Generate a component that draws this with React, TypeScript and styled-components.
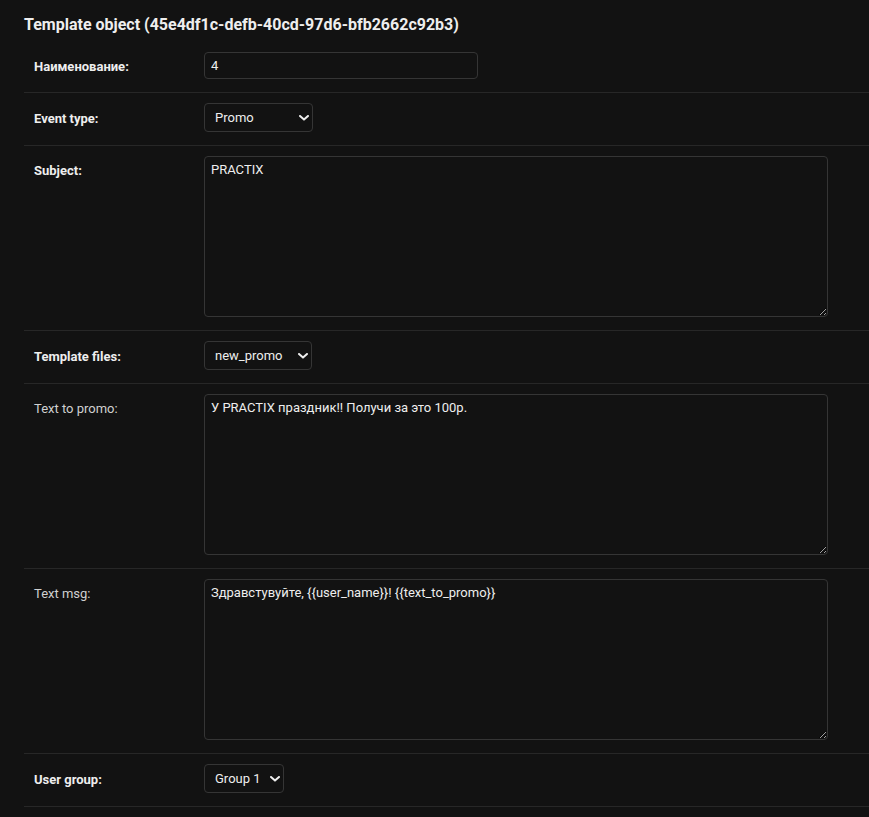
import React from 'react';
import styled, { createGlobalStyle } from 'styled-components';

const bodyBg = '#121212';
const bodyFg = '#eeeeee';
const quietFg = '#d0d0d0';
const hairline = '#272727';
const borderColor = '#353535';

const GlobalStyle = createGlobalStyle`
  html, body {
    margin: 0;
    padding: 0;
    background: ${bodyBg};
    color: ${bodyFg};
    font-family: Roboto, "Noto Sans", "Liberation Sans", sans-serif;
    font-size: 13px;
  }
  * { box-sizing: border-box; }
`;

const Page = styled.div`
  padding: 15px 0 0 24px;
  min-height: 817px;
`;

const Title = styled.h2`
  margin: 0 0 8px;
  font-size: 16px;
  line-height: 19px;
  font-weight: 700;
  color: ${bodyFg};
`;

const Fieldset = styled.div`
  display: flex;
  flex-direction: column;
`;

const Row = styled.div`
  display: flex;
  align-items: flex-start;
  padding: 10px 10px 13px;
  border-bottom: 1px solid ${hairline};
`;

const Label = styled.label<{ $required?: boolean; $offset?: number }>`
  flex: 0 0 170px;
  padding: ${(p) => p.$offset ?? 7}px 10px 0 0;
  font-size: 13px;
  line-height: normal;
  font-weight: ${(p) => (p.$required ? 700 : 400)};
  color: ${(p) => (p.$required ? bodyFg : quietFg)};
`;

const TextInput = styled.input`
  width: 274px;
  height: 27px;
  padding: 5px 6px;
  margin: 0;
  border: 1px solid ${borderColor};
  border-radius: 4px;
  background: ${bodyBg};
  color: ${bodyFg};
  font: 13px Roboto, "Noto Sans", sans-serif;
  outline: none;
`;

const TextArea = styled.textarea`
  display: block;
  width: 624px;
  height: 161px;
  padding: 5px 6px;
  margin: 0;
  border: 1px solid ${borderColor};
  border-radius: 4px;
  background: ${bodyBg};
  color: ${bodyFg};
  font: 13px Roboto, "Noto Sans", sans-serif;
  color-scheme: dark;
  outline: none;
`;

const SelectWrap = styled.div<{ $width: number }>`
  position: relative;
  width: ${(p) => p.$width}px;
  height: 29px;
`;

const Select = styled.select`
  appearance: none;
  width: 100%;
  height: 29px;
  padding: 0 20px 0 10px;
  margin: 0;
  border: 1px solid ${borderColor};
  border-radius: 4px;
  background: ${bodyBg};
  color: ${bodyFg};
  font: 13px Roboto, "Noto Sans", sans-serif;
  outline: none;
`;

const Chevron = styled.svg`
  position: absolute;
  right: 4px;
  top: 12px;
  width: 10px;
  height: 6px;
  pointer-events: none;
`;

const Dropdown = ({ value, options, width }: { value: string; options: string[]; width: number }) => (
  <SelectWrap $width={width}>
    <Select defaultValue={value}>
      {options.map((o) => (
        <option key={o} value={o}>
          {o}
        </option>
      ))}
    </Select>
    <Chevron viewBox="0 0 10 6">
      <path d="M1 1l4 3.6L9 1" fill="none" stroke={bodyFg} strokeWidth="2" strokeLinecap="round" strokeLinejoin="round" />
    </Chevron>
  </SelectWrap>
);

export default function App() {
  return (
    <>
      <GlobalStyle />
      <Page>
        <Title>Template object (45e4df1c-defb-40cd-97d6-bfb2662c92b3)</Title>
        <Fieldset>
          <Row>
            <Label $required>Наименование:</Label>
            <TextInput defaultValue="4" />
          </Row>
          <Row>
            <Label $required $offset={8}>Event type:</Label>
            <Dropdown value="Promo" options={['Promo', 'Registration']} width={109} />
          </Row>
          <Row>
            <Label $required>Subject:</Label>
            <TextArea defaultValue="PRACTIX" />
          </Row>
          <Row>
            <Label $required $offset={8}>Template files:</Label>
            <Dropdown value="new_promo" options={['new_promo']} width={108} />
          </Row>
          <Row>
            <Label>Text to promo:</Label>
            <TextArea defaultValue="У PRACTIX праздник!! Получи за это 100р." />
          </Row>
          <Row>
            <Label>Text msg:</Label>
            <TextArea defaultValue="Здравстувуйте, {{user_name}}! {{text_to_promo}}" />
          </Row>
          <Row>
            <Label $required $offset={8}>User group:</Label>
            <Dropdown value="Group 1" options={['Group 1']} width={80} />
          </Row>
        </Fieldset>
      </Page>
    </>
  );
}
